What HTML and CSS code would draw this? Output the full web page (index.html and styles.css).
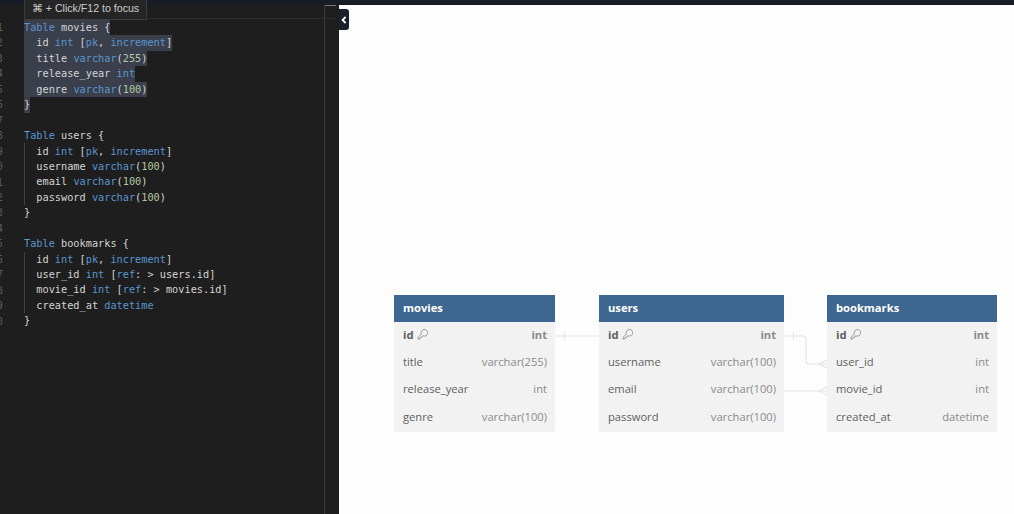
FILE: index.html
```html
<!DOCTYPE html>
<html lang="en">
<head>
    <meta charset="UTF-8">
    <title>DB Diagram</title>
    <link rel="stylesheet" href="styles.css">
</head>
<body>

<div class="top-bar"></div>

<div class="workspace">
    <!-- Code editor -->
    <section class="editor">
        <div class="focus-hint">⌘ + Click/F12 to focus</div>
        <div class="current-line"></div>
        <div class="scroll-mark"></div>
        <div class="indent-guide guide-users"></div>
        <div class="indent-guide guide-bookmarks"></div>

        <div class="code-area">
            <div class="gutter">
                <div>1</div><div>2</div><div>3</div><div>4</div><div>5</div><div>6</div><div>7</div><div>8</div><div>9</div><div>0</div>
                <div>1</div><div>2</div><div>3</div><div>4</div><div>5</div><div>6</div><div>7</div><div>8</div><div>9</div><div>0</div>
            </div>
            <div class="code">
                <div class="line"><span class="sel"><span class="kw">Table</span> movies {</span></div>
                <div class="line"><span class="sel">  id <span class="kw">int</span> [<span class="kw">pk</span>, <span class="kw">increment</span>]</span></div>
                <div class="line"><span class="sel">  title <span class="kw">varchar</span>(<span class="num">255</span>)</span></div>
                <div class="line"><span class="sel">  release_year <span class="kw">int</span></span></div>
                <div class="line"><span class="sel">  genre <span class="kw">varchar</span>(<span class="num">100</span>)</span></div>
                <div class="line"><span class="sel">}</span></div>
                <div class="line"> </div>
                <div class="line"><span class="kw">Table</span> users {</div>
                <div class="line">  id <span class="kw">int</span> [<span class="kw">pk</span>, <span class="kw">increment</span>]</div>
                <div class="line">  username <span class="kw">varchar</span>(<span class="num">100</span>)</div>
                <div class="line">  email <span class="kw">varchar</span>(<span class="num">100</span>)</div>
                <div class="line">  password <span class="kw">varchar</span>(<span class="num">100</span>)</div>
                <div class="line">}</div>
                <div class="line"> </div>
                <div class="line"><span class="kw">Table</span> bookmarks {</div>
                <div class="line">  id <span class="kw">int</span> [<span class="kw">pk</span>, <span class="kw">increment</span>]</div>
                <div class="line">  user_id <span class="kw">int</span> [<span class="kw">ref</span>: &gt; users.id]</div>
                <div class="line">  movie_id <span class="kw">int</span> [<span class="kw">ref</span>: &gt; movies.id]</div>
                <div class="line">  created_at <span class="kw">datetime</span></div>
                <div class="line">}</div>
            </div>
        </div>
    </section>

    <!-- Diagram canvas -->
    <section class="canvas">
        <button class="collapse-btn">
            <svg width="6" height="8" viewBox="0 0 6 8"><path d="M4.6 1 L1.6 4 L4.6 7" fill="none" stroke="#fff" stroke-width="1.8"/></svg>
        </button>

        <svg class="connectors" width="675" height="509" viewBox="339 5 675 509">
            <g fill="none" stroke="#e4e4e4" stroke-width="1.2">
                <path d="M555 336 H599"/>
                <path d="M564.500 332 V340"/>
                <path d="M784 336 H803 Q806 336 806 339 V361 Q806 364 809 364 H827"/>
                <path d="M793.500 332 V340"/>
                <path d="M819 364 L827 360 M819 364 L827 368"/>
                <path d="M784 391 H827"/>
                <path d="M819 391 L827 387 M819 391 L827 395"/>
            </g>
        </svg>

        <div class="db-table table-movies">
            <div class="db-head">movies</div>
            <div class="db-row pk"><span class="field">id <svg class="key" viewBox="0 0 12 12"><path d="M1 11 L1.500 8.800 L4.800 5.500 A3.600 3.600 0 1 1 6.800 7.500 L5.600 7.800 L5.200 9 L3.900 9.200 L3.400 10.600 Z" fill="none" stroke="#777" stroke-width="0.8"/></svg></span><span>int</span></div>
            <div class="db-row"><span class="field">title</span><span>varchar(255)</span></div>
            <div class="db-row"><span class="field">release_year</span><span>int</span></div>
            <div class="db-row"><span class="field">genre</span><span>varchar(100)</span></div>
        </div>

        <div class="db-table table-users">
            <div class="db-head">users</div>
            <div class="db-row pk"><span class="field">id <svg class="key" viewBox="0 0 12 12"><path d="M1 11 L1.500 8.800 L4.800 5.500 A3.600 3.600 0 1 1 6.800 7.500 L5.600 7.800 L5.200 9 L3.900 9.200 L3.400 10.600 Z" fill="none" stroke="#777" stroke-width="0.8"/></svg></span><span>int</span></div>
            <div class="db-row"><span class="field">username</span><span>varchar(100)</span></div>
            <div class="db-row"><span class="field">email</span><span>varchar(100)</span></div>
            <div class="db-row"><span class="field">password</span><span>varchar(100)</span></div>
        </div>

        <div class="db-table table-bookmarks">
            <div class="db-head">bookmarks</div>
            <div class="db-row pk"><span class="field">id <svg class="key" viewBox="0 0 12 12"><path d="M1 11 L1.500 8.800 L4.800 5.500 A3.600 3.600 0 1 1 6.800 7.500 L5.600 7.800 L5.200 9 L3.900 9.200 L3.400 10.600 Z" fill="none" stroke="#777" stroke-width="0.8"/></svg></span><span>int</span></div>
            <div class="db-row"><span class="field">user_id</span><span>int</span></div>
            <div class="db-row"><span class="field">movie_id</span><span>int</span></div>
            <div class="db-row"><span class="field">created_at</span><span>datetime</span></div>
        </div>
    </section>
</div>

</body>
</html>
```

FILE: styles.css
```css
html, body {
    height: 100%;
    margin: 0;
    overflow: hidden;
    background: #fdfdfd;
}

body {
    display: flex;
    flex-direction: column;
}

.top-bar {
    height: 5px;
    background: #171c26;
    flex: none;
}

.workspace {
    flex: 1;
    display: flex;
    min-height: 0;
}

/* Editor */
.editor {
    position: relative;
    width: 339px;
    flex: none;
    background: #1e1e1e;
}

.editor::after {
    content: "";
    position: absolute;
    top: 0;
    bottom: 0;
    left: 324px;
    width: 1px;
    background: #3a3a3a;
}

.focus-hint {
    position: absolute;
    top: -5px;
    left: 24px;
    z-index: 2;
    width: 123px;
    height: 20px;
    box-sizing: border-box;
    text-align: center;
    background: #252526;
    border: 1px solid #3c3c3c;
    border-top: 0;
    color: #cccccc;
    font: 10.6px/17px "Liberation Sans", sans-serif;
}

.current-line {
    position: absolute;
    top: 13px;
    left: 24px;
    width: 311px;
    height: 1px;
    background: #2c2c2c;
}

.scroll-mark {
    position: absolute;
    top: 0;
    left: 325px;
    width: 11px;
    height: 1px;
    background: #777;
}

.indent-guide {
    position: absolute;
    left: 24px;
    width: 1px;
    background: #404040;
}

.guide-users {
    top: 138px;
    height: 62px;
}

.guide-bookmarks {
    top: 247px;
    height: 61px;
}

.code-area {
    display: flex;
    padding-top: 15px;
    font-family: "DejaVu Sans Mono", monospace;
    font-size: 10.25px;
    line-height: 15.45px;
}

.gutter {
    width: 3px;
    margin-right: 21px;
    flex: none;
    direction: rtl;
    color: #5c5c5c;
}

.code {
    flex: 1;
    color: #d4d4d4;
}

.line {
    height: 15.45px;
    white-space: pre;
}

.sel {
    display: inline-block;
    height: 15.45px;
    background: #3a3f4b;
}

.kw {
    color: #5a95d0;
}

.num {
    color: #b0c9a2;
}

/* Canvas */
.canvas {
    position: relative;
    flex: 1;
    background: #fdfdfd;
}

.collapse-btn {
    position: absolute;
    top: 4px;
    left: 0;
    width: 10px;
    height: 21px;
    padding: 0;
    display: flex;
    align-items: center;
    justify-content: center;
    border: 0;
    border-radius: 0 3px 3px 0;
    background: #1a1f29;
}

.connectors {
    position: absolute;
    top: 0;
    left: 0;
}

.db-table {
    position: absolute;
    top: 290px;
    background: #f2f2f2;
    font-family: "Open Sans", sans-serif;
    font-size: 11.2px;
}

.table-movies {
    left: 55px;
    width: 161px;
}

.table-users {
    left: 260px;
    width: 185px;
}

.table-bookmarks {
    left: 488px;
    width: 170px;
}

.db-head {
    height: 27px;
    line-height: 25px;
    padding: 0 9px;
    background: #3d6690;
    color: #fff;
    font-weight: 700;
}

.db-row {
    height: 27.3px;
    box-sizing: border-box;
    padding: 0 8px 3px 9px;
    display: flex;
    align-items: center;
    justify-content: space-between;
    color: #8a8a8a;
}

.db-row.pk {
    padding-bottom: 2px;
}

.db-table .db-row:last-child {
    height: 28px;
    padding-bottom: 2px;
}

.field {
    color: #5f5f5f;
    display: flex;
    align-items: center;
    gap: 3px;
}

.pk {
    font-weight: 700;
}

.key {
    width: 11px;
    height: 11px;
}
```
